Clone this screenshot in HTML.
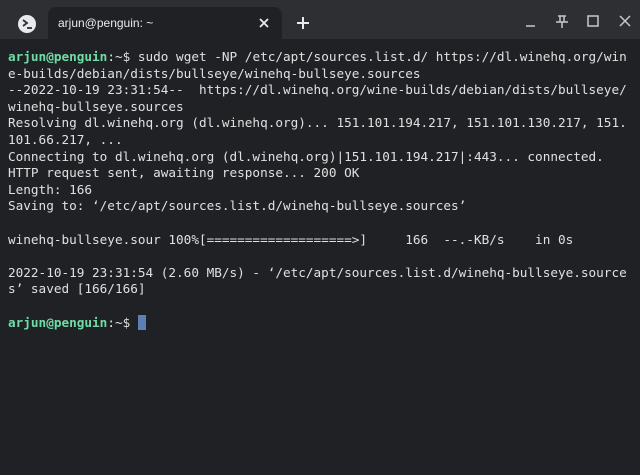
<!DOCTYPE html>
<html><head><style>
body{margin:0;width:640px;height:475px;background:#202124;overflow:hidden;font-family:"Liberation Sans",sans-serif}
.bar{position:absolute;left:0;top:0;width:640px;height:39px;background:#2e2f32}
.tab{position:absolute;left:48px;top:7px;width:234px;height:32px;background:#202124;border-radius:8px 8px 0 0}
.tab span{position:absolute;left:10px;top:9px;color:#e8eaed;font-size:12px}
.term{position:absolute;left:8px;top:49px;font-family:"DejaVu Sans Mono",monospace;font-size:12.7px;line-height:16.6px;color:#e0e0e0;white-space:pre}
.g{color:#6fdca6;font-weight:bold}
.cur{display:inline-block;width:8px;height:15px;background:#5d7fb8;vertical-align:-3px}
</style></head><body>
<div class="bar">
<svg style="position:absolute;left:17px;top:14px" width="20" height="20"><circle cx="10" cy="10" r="9" fill="#e8eaed"/><path d="M6 6l4 3-4 3" stroke="#2e2f32" stroke-width="1.8" fill="none"/><path d="M10 14h5" stroke="#2e2f32" stroke-width="1.8"/></svg>
<div class="tab"><span>arjun@penguin: ~</span>
<svg style="position:absolute;left:210px;top:10px" width="12" height="12"><path d="M2 2l8 8M10 2l-8 8" stroke="#e8eaed" stroke-width="1.8"/></svg></div>
<svg style="position:absolute;left:296px;top:16px" width="14" height="14"><path d="M7 1v12M1 7h12" stroke="#e8eaed" stroke-width="2"/></svg>
<svg style="position:absolute;left:523px;top:14px" width="110" height="14"><path d="M3 12h9" stroke="#c8c8c8" stroke-width="1.5"/><path d="M35 2h8M37 2v6M41 2v6M33 8h12M39 8v6" stroke="#c8c8c8" stroke-width="1.5" fill="none"/><rect x="65" y="2" width="10" height="10" stroke="#c8c8c8" stroke-width="1.5" fill="none"/><path d="M97 2l10 10M107 2l-10 10" stroke="#c8c8c8" stroke-width="1.5"/></svg>
</div>
<div class="term"><span class="g">arjun@penguin</span>:~$ sudo wget -NP /etc/apt/sources.list.d/ https://dl.winehq.org/win
e-builds/debian/dists/bullseye/winehq-bullseye.sources
--2022-10-19 23:31:54--  https://dl.winehq.org/wine-builds/debian/dists/bullseye/
winehq-bullseye.sources
Resolving dl.winehq.org (dl.winehq.org)... 151.101.194.217, 151.101.130.217, 151.
101.66.217, ...
Connecting to dl.winehq.org (dl.winehq.org)|151.101.194.217|:443... connected.
HTTP request sent, awaiting response... 200 OK
Length: 166
Saving to: ‘/etc/apt/sources.list.d/winehq-bullseye.sources’

winehq-bullseye.sour 100%[===================>]     166  --.-KB/s    in 0s

2022-10-19 23:31:54 (2.60 MB/s) - ‘/etc/apt/sources.list.d/winehq-bullseye.source
s’ saved [166/166]

<span class="g">arjun@penguin</span>:~$ <span class="cur"></span></div>
</body></html>
